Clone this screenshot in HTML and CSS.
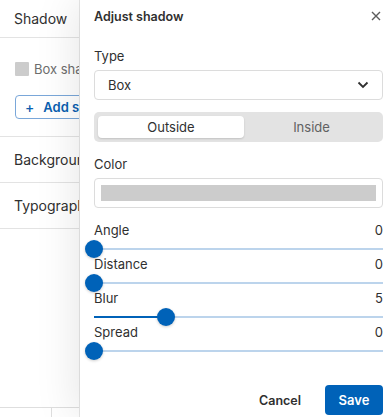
FILE: index.html
```html
<!DOCTYPE html>
<html lang="en">
<head>
    <meta charset="UTF-8">
    <meta name="viewport" content="width=device-width, initial-scale=1.0">
    <title>Adjust shadow</title>
<link rel="stylesheet" href="styles.css">
</head>
<body>
    <div class="page">
        <aside class="sidebar">
            <div class="side-head">Shadow</div>
            <div class="side-body">
                <div class="shadow-item">
                    <span class="swatch"></span>
                    <span>Box shadow</span>
                </div>
                <button class="add-btn"><span class="plus">+</span> Add shadow</button>
            </div>
            <div class="side-row">Background</div>
            <div class="side-row">Typography</div>
            <div class="side-fill"></div>
            <div class="side-foot">
                <div class="foot-cell"></div>
                <div class="foot-cell"></div>
            </div>
        </aside>

        <section class="drawer">
            <header class="drawer-head">
                <h2>Adjust shadow</h2>
                <button class="close" title="Close">
                    <svg width="10" height="10" viewBox="0 0 10 10">
                        <path d="M1 1 L9 9 M9 1 L1 9" stroke="#5c5c5c" stroke-width="1.4" fill="none"/>
                    </svg>
                </button>
            </header>

            <div class="drawer-body">
                <div class="field">
                    <label>Type</label>
                    <div class="select">
                        <span>Box</span>
                        <svg width="12" height="8" viewBox="0 0 12 8">
                            <path d="M1.5 1.5 L6 6 L10.5 1.5" stroke="#303030" stroke-width="1.8" fill="none"/>
                        </svg>
                    </div>
                </div>

                <div class="segment">
                    <button class="seg active">Outside</button>
                    <button class="seg">Inside</button>
                </div>

                <div class="field">
                    <label>Color</label>
                    <div class="color-input"><div class="color-fill"></div></div>
                </div>

                <div class="sliders">
                    <div class="slider">
                        <div class="slider-top"><span>Angle</span><span>0</span></div>
                        <div class="track"><div class="fill" style="width: 0%"><span class="thumb"></span></div></div>
                    </div>
                    <div class="slider">
                        <div class="slider-top"><span>Distance</span><span>0</span></div>
                        <div class="track"><div class="fill" style="width: 0%"><span class="thumb"></span></div></div>
                    </div>
                    <div class="slider">
                        <div class="slider-top"><span>Blur</span><span>5</span></div>
                        <div class="track"><div class="fill" style="width: 25%"><span class="thumb"></span></div></div>
                    </div>
                    <div class="slider">
                        <div class="slider-top"><span>Spread</span><span>0</span></div>
                        <div class="track"><div class="fill" style="width: 0%"><span class="thumb"></span></div></div>
                    </div>
                </div>
            </div>

            <footer class="drawer-foot">
                <button class="cancel">Cancel</button>
                <button class="save">Save</button>
            </footer>
        </section>
    </div>
</body>
</html>
```

FILE: styles.css
```css
*{
    padding: 0;
    margin: 0;
    box-sizing: border-box;
}
body{
    height: 417px;
    width: 390px;
    overflow: hidden;
    background: #fff;
    font-family: Inter, "Noto Sans", sans-serif;
    color: #303030;
}
button{
    font-family: inherit;
    border: none;
    background: none;
    cursor: pointer;
}
.page{
    position: relative;
    height: 100%;
    width: 100%;
}

/* sidebar under the drawer */
.sidebar{
    height: 100%;
    width: 100%;
    display: flex;
    flex-direction: column;
    background: #fff;
}
.side-head{
    height: 38px;
    padding: 0 14px;
    display: flex;
    align-items: center;
    font-size: 14px;
    color: #303030;
    border-bottom: 1px solid #e3e3e3;
}
.side-body{
    padding: 23px 15px 17px;
    display: flex;
    flex-direction: column;
    gap: 18px;
    border-bottom: 1px solid #e3e3e3;
}
.shadow-item{
    display: flex;
    align-items: center;
    gap: 5px;
    font-size: 13px;
    color: #6d6d6d;
    white-space: nowrap;
}
.swatch{
    width: 14px;
    height: 14px;
    background: #cccccc;
    border-radius: 1px;
}
.add-btn{
    align-self: flex-start;
    height: 24px;
    padding: 0 9px;
    border: 1px solid #7aa7d9;
    border-radius: 4px;
    color: #0b5fb0;
    font-size: 13px;
    font-weight: 600;
    white-space: nowrap;
    display: flex;
    align-items: center;
    gap: 9px;
}
.add-btn .plus{
    font-weight: 500;
    font-size: 14px;
}
.side-row{
    height: 46px;
    padding: 0 14px;
    display: flex;
    align-items: center;
    font-size: 14px;
    border-bottom: 1px solid #e3e3e3;
}
.side-fill{
    flex: 1;
}
.side-foot{
    height: 10px;
    display: flex;
    border-top: 1px solid #dedede;
}
.foot-cell{
    width: 52px;
    border-right: 1px solid #dedede;
}

/* drawer */
.drawer{
    position: absolute;
    top: 0;
    right: 0;
    width: 310px;
    height: 100%;
    background: #fff;
    display: flex;
    flex-direction: column;
    box-shadow: -4px 0 40px rgba(0, 0, 0, 0.10), -1px 0 0 #e8e8e8;
}
.drawer-head{
    height: 32px;
    padding: 0 4px 0 14px;
    display: flex;
    align-items: center;
    justify-content: space-between;
}
.drawer-head h2{
    font-size: 12.5px;
    font-weight: 600;
    color: #303030;
}
.close{
    width: 20px;
    height: 20px;
    display: flex;
    align-items: center;
    justify-content: center;
}
.drawer-body{
    flex: 1;
    padding: 16px 7px 0 14px;
    display: flex;
    flex-direction: column;
}
.field{
    display: flex;
    flex-direction: column;
    gap: 6px;
}
.field label{
    font-size: 13px;
    line-height: 16px;
}
.select{
    height: 30px;
    border: 1px solid #dcdcdc;
    border-radius: 4px;
    padding: 0 13px;
    display: flex;
    align-items: center;
    justify-content: space-between;
    font-size: 13px;
}
.segment{
    margin: 12px 0 14px;
    height: 30px;
    background: #e3e3e3;
    border-radius: 5px;
    padding: 4px;
    display: flex;
}
.seg{
    flex: 1;
    font-size: 13px;
    color: #616161;
    border-radius: 4px;
}
.seg.active{
    flex: 0 0 146px;
    background: #fff;
    color: #303030;
    box-shadow: 0 1px 2px rgba(0, 0, 0, 0.15);
}
.color-input{
    height: 30px;
    border: 1px solid #dcdcdc;
    border-radius: 4px;
    padding: 6px 6px;
}
.color-fill{
    height: 100%;
    background: #cccccc;
}
.sliders{
    margin-top: 14px;
    display: flex;
    flex-direction: column;
}
.slider{
    height: 34px;
}
.slider-top{
    display: flex;
    justify-content: space-between;
    font-size: 13px;
    line-height: 16px;
}
.track{
    margin-top: 10px;
    height: 2px;
    background: #bcd4ec;
}
.fill{
    position: relative;
    height: 100%;
    background: #0062b8;
}
.thumb{
    position: absolute;
    right: -9px;
    top: -8px;
    width: 18px;
    height: 18px;
    border-radius: 50%;
    background: #0062b8;
    box-shadow: 0 1px 3px rgba(0, 0, 0, 0.2);
}
.drawer-foot{
    height: 48px;
    padding: 0 7px 0 14px;
    display: flex;
    justify-content: flex-end;
    align-items: flex-end;
    gap: 24px;
}
.cancel{
    height: 30px;
    margin-bottom: 2px;
    font-size: 12.5px;
    font-weight: 600;
    color: #303030;
}
.save{
    height: 30px;
    width: 58px;
    margin-bottom: 2px;
    border-radius: 4px;
    background: #0062b8;
    color: #fff;
    font-size: 13px;
    font-weight: 600;
}
```
